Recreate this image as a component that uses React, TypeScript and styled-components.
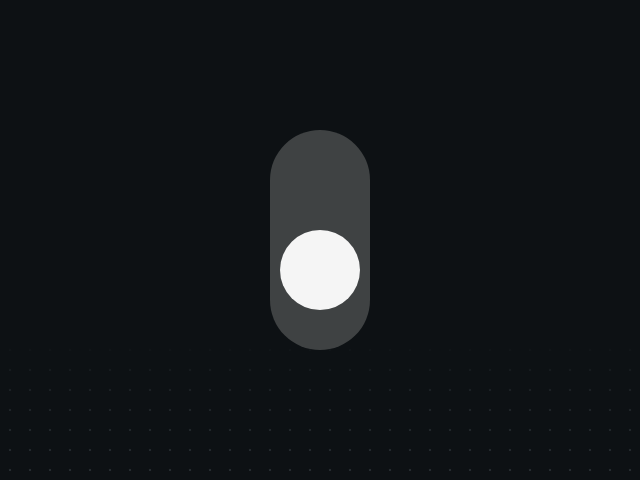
import styled, { createGlobalStyle } from "styled-components";

const GlobalStyle = createGlobalStyle`
  html, body {
    margin: 0;
    padding: 0;
    background: #0d1114;
  }
  #root {
    height: 100vh;
  }
`;

const Page = styled.div`
  height: 100vh;
  display: flex;
  align-items: center;
  justify-content: center;
  background-color: #0d1114;
  background-image:
    linear-gradient(to bottom, #0d1114 0, #0d1114 335px, rgba(13, 17, 20, 0.35) 400px, rgba(13, 17, 20, 0) 480px),
    radial-gradient(circle at 10px 10px, #262d31 0, #262d31 1px, transparent 1.6px);
  background-size: 100% 100%, 20px 20px;
  background-repeat: no-repeat, repeat;
`;

const Track = styled.button<{ $on: boolean }>`
  width: 100px;
  height: 220px;
  border: 0;
  padding: 0 0 40px;
  border-radius: 50px;
  background: #3f4243;
  display: flex;
  flex-direction: column;
  align-items: center;
  justify-content: ${(p) => (p.$on ? "flex-start" : "flex-end")};
  cursor: pointer;
`;

const Knob = styled.span`
  width: 80px;
  height: 80px;
  border-radius: 50%;
  background: #f5f5f5;
`;

export default function App() {
  return (
    <>
      <GlobalStyle />
      <Page>
        <Track $on={false} aria-label="toggle">
          <Knob />
        </Track>
      </Page>
    </>
  );
}
